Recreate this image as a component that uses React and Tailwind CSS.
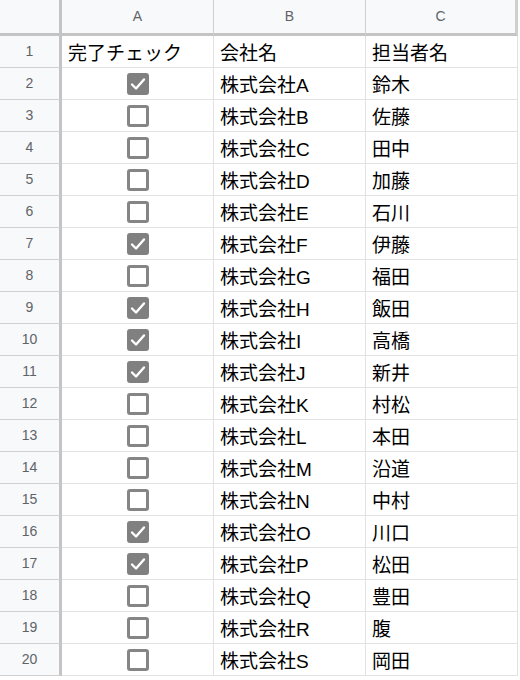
const rows = [
  { done: true, company: "株式会社A", person: "鈴木" },
  { done: false, company: "株式会社B", person: "佐藤" },
  { done: false, company: "株式会社C", person: "田中" },
  { done: false, company: "株式会社D", person: "加藤" },
  { done: false, company: "株式会社E", person: "石川" },
  { done: true, company: "株式会社F", person: "伊藤" },
  { done: false, company: "株式会社G", person: "福田" },
  { done: true, company: "株式会社H", person: "飯田" },
  { done: true, company: "株式会社I", person: "高橋" },
  { done: true, company: "株式会社J", person: "新井" },
  { done: false, company: "株式会社K", person: "村松" },
  { done: false, company: "株式会社L", person: "本田" },
  { done: false, company: "株式会社M", person: "沿道" },
  { done: false, company: "株式会社N", person: "中村" },
  { done: true, company: "株式会社O", person: "川口" },
  { done: true, company: "株式会社P", person: "松田" },
  { done: false, company: "株式会社Q", person: "豊田" },
  { done: false, company: "株式会社R", person: "腹" },
  { done: false, company: "株式会社S", person: "岡田" },
];

function Checkbox({ checked }) {
  if (checked) {
    return (
      <div className="w-[22px] h-[22px] rounded-[3px] bg-[#808080] flex items-center justify-center">
        <svg width="18" height="18" viewBox="0 0 18 18">
          <path d="M3 9.5 L7 13.5 L15 4.5" fill="none" stroke="white" strokeWidth="2.4" strokeLinecap="round" strokeLinejoin="round" />
        </svg>
      </div>
    );
  }
  return <div className="w-[22px] h-[22px] rounded-[3px] border-[3px] border-[#858585] bg-white" />;
}

const cell = "h-[32px] border-b border-r border-[#e2e2e2] flex items-center px-[6px] pt-[3px] text-[19px] text-black leading-none";
const rowHead = "h-[32px] border-b border-[#d0d0d0] border-r-[3px] border-r-[#c4c4c4] bg-[#f8f9fa] flex items-center justify-center text-[14px] text-[#5f6368]";
const colHead = "h-[36px] border-b-[3px] border-b-[#c4c4c4] border-r border-r-[#cfcfcf] bg-[#f8f9fa] flex items-center justify-center text-[14px] text-[#5f6368]";

export default function App() {
  return (
    <div className="w-[520px] h-[680px] overflow-hidden bg-white" style={{ fontFamily: '"Liberation Sans", "Noto Sans CJK JP", sans-serif' }}>
      <div className="grid grid-cols-[62px_152px_152px_152px_2px]">
        <div className="h-[36px] bg-[#f8f9fa] border-b-[3px] border-b-[#c4c4c4] border-r-[3px] border-r-[#c4c4c4]" />
        <div className={colHead}>A</div>
        <div className={colHead}>B</div>
        <div className={colHead + " border-r-[3px] border-r-[#c4c4c4]"}>C</div>
        <div className="h-[36px] bg-white" />

        <div className={rowHead}>1</div>
        <div className={cell}>完了チェック</div>
        <div className={cell}>会社名</div>
        <div className={cell}>担当者名</div>
        <div className="h-[32px]" />

        {rows.map((r, i) => (
          <div key={i} className="contents">
            <div className={rowHead}>{i + 2}</div>
            <div className={cell.replace("pt-[3px]", "pt-0") + " justify-center"}>
              <Checkbox checked={r.done} />
            </div>
            <div className={cell}>{r.company}</div>
            <div className={cell}>{r.person}</div>
            <div className="h-[32px]" />
          </div>
        ))}
      </div>
    </div>
  );
}
